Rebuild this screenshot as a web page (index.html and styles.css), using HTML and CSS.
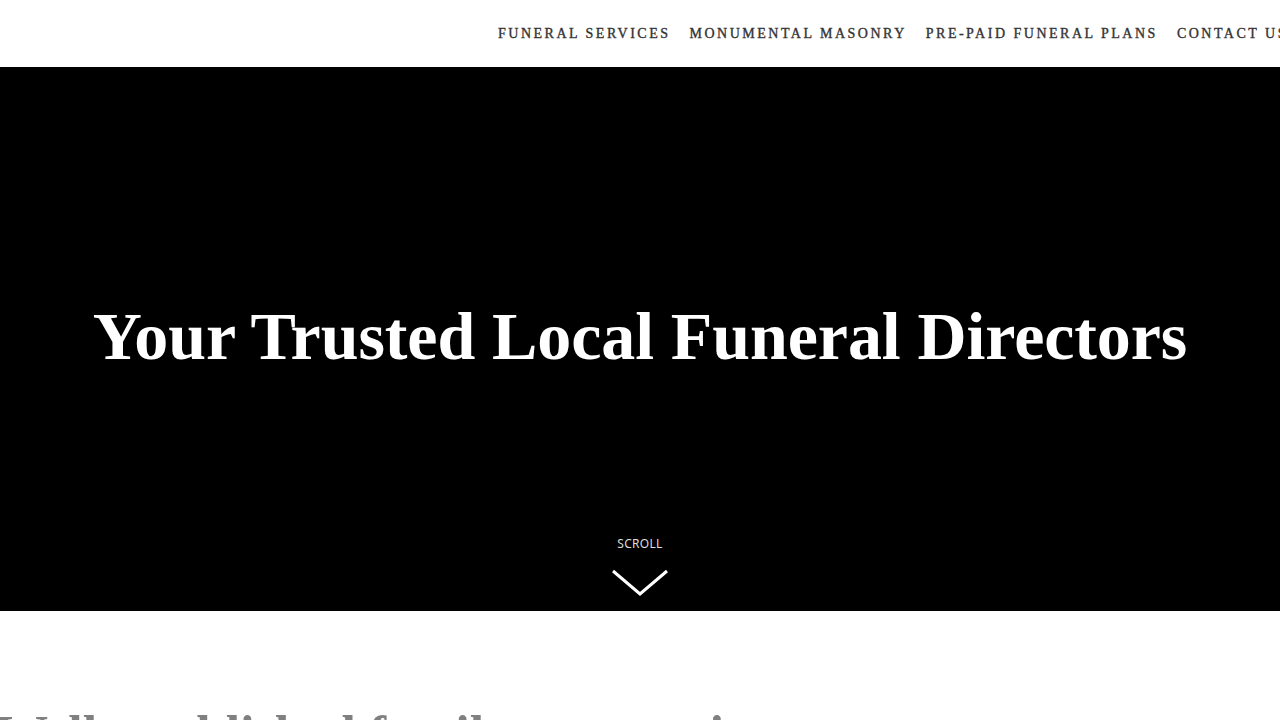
FILE: index.html
```html
<!DOCTYPE html>
<html lang="en">
<head>
<meta charset="utf-8">
<title>Your Trusted Local Funeral Directors</title>
<link rel="stylesheet" href="styles.css">
</head>
<body>
<header class="site-header">
  <nav class="main-nav">
    <a href="#">Funeral Services</a>
    <a href="#">Monumental Masonry</a>
    <a href="#">Pre-Paid Funeral Plans</a>
    <a href="#">Contact Us</a>
  </nav>
</header>
<section class="hero">
  <h1 class="hero-title">Your Trusted Local Funeral Directors</h1>
  <a class="scroll-cue" href="#intro">
    <span class="scroll-label">SCROLL</span>
    <svg class="scroll-chevron" width="58" height="28" viewBox="0 0 58 28" aria-hidden="true">
      <polyline points="2,2 29,25 56,2" fill="none" stroke="#fff" stroke-width="3"/>
    </svg>
  </a>
</section>
<section class="intro" id="intro">
  <h2 class="intro-title">Well established family run service</h2>
</section>
</body>
</html>
```

FILE: styles.css
```css
html, body {
  margin: 0;
  padding: 0;
}

body {
  background: #fff;
  font-family: "Liberation Serif", "Times New Roman", serif;
  overflow-x: hidden;
  width: 1280px;
}

.site-header {
  height: 67px;
  display: flex;
  align-items: center;
  overflow: hidden;
}

.main-nav {
  display: flex;
  gap: 19px;
  margin-left: 498px;
  white-space: nowrap;
}

.main-nav a {
  color: #333;
  text-decoration: none;
  text-transform: uppercase;
  font-family: "Liberation Serif", serif;
  font-size: 14px;
  letter-spacing: 2.5px;
  -webkit-text-stroke: 0.35px #333;
}

.hero {
  background: #000;
  height: 544px;
  display: flex;
  flex-direction: column;
  align-items: center;
}

.hero-title {
  margin: 0;
  margin-top: 229px;
  color: #fff;
  font-family: "Liberation Serif", serif;
  font-weight: 700;
  font-size: 68px;
  line-height: 1.2;
  letter-spacing: -0.1px;
}

.scroll-cue {
  margin-top: auto;
  margin-bottom: 14px;
  display: flex;
  flex-direction: column;
  align-items: center;
  gap: 19px;
  text-decoration: none;
}

.scroll-label {
  color: #ddd;
  font-family: "Noto Sans", sans-serif;
  font-size: 12px;
  letter-spacing: 0.3px;
  line-height: 1;
}

.scroll-chevron {
  display: block;
}

.intro {
  padding: 93px 0 0;
}

.intro-title {
  margin: 0;
  margin-left: -4px;
  color: #808080;
  font-family: "Liberation Serif", serif;
  font-weight: 700;
  font-size: 52px;
  line-height: 1.2;
}
```
